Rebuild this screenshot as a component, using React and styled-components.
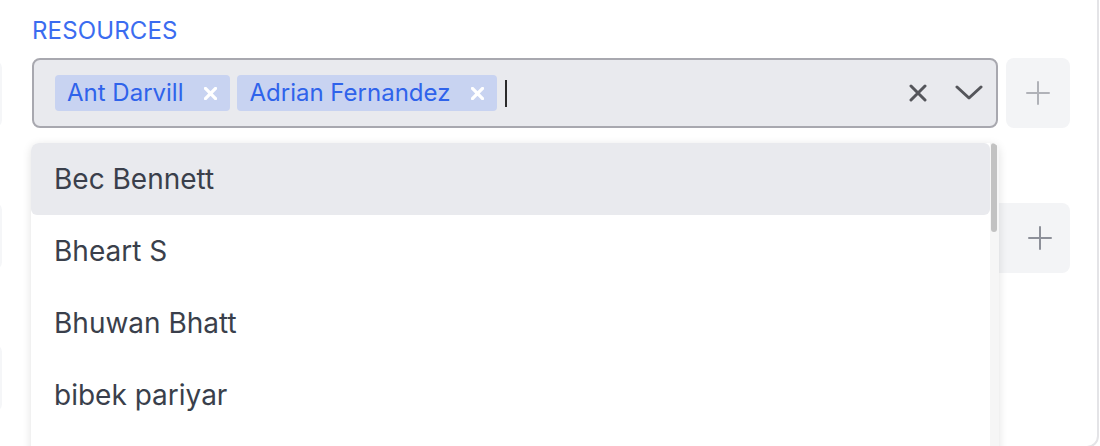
import React from 'react'
import styled, { createGlobalStyle } from 'styled-components'

const GlobalStyle = createGlobalStyle`
  html, body {
    margin: 0;
    padding: 0;
    background: #fff;
    overflow: hidden;
  }
  body {
    font-family: Inter, 'Noto Sans', sans-serif;
  }
`

const Card = styled.div`
  box-sizing: border-box;
  width: 1139px;
  height: 468px;
  margin: -20px 0 0 -40px;
  border: 2px solid #e4e4e7;
  border-radius: 12px;
  display: grid;
  grid-template-columns: 40px 1038px;
  column-gap: 30px;
  overflow: hidden;
`

const SideColumn = styled.div`
  display: flex;
  flex-direction: column;
  gap: 74px;
  padding-top: 78px;
`

const Stub = styled.div`
  height: 68px;
  background: #f5f6f8;
  border-radius: 8px;
`

const Main = styled.div`
  display: flex;
  flex-direction: column;
  gap: 34px;
  padding-top: 35px;
`

const Field = styled.div`
  display: flex;
  flex-direction: column;
  gap: 13px;
`

const Label = styled.div`
  height: 28px;
  font-size: 24px;
  line-height: 28px;
  letter-spacing: 0.15px;
  text-transform: uppercase;
  color: #3b6cf0;
`

const Row = styled.div`
  position: relative;
  display: flex;
  gap: 8px;
  padding-right: ${(p) => (p.bare ? 72 : 0)}px;
`

const SelectBox = styled.div`
  box-sizing: border-box;
  flex: 1;
  height: 70px;
  display: flex;
  align-items: center;
  padding: 0 13px 0 21px;
  border: 2px solid ${(p) => (p.focused ? '#a8a8af' : '#e5e7eb')};
  border-radius: 8px;
  background: ${(p) => (p.focused ? '#e9eaee' : '#f3f4f6')};
`

const Values = styled.div`
  flex: 1;
  display: flex;
  align-items: center;
  gap: 7px;
`

const Chip = styled.div`
  height: 36px;
  display: flex;
  align-items: center;
  padding: 0 13px 0 12px;
  border-radius: 4px;
  background: #c8d3f1;
  color: #2f63eb;
  font-size: 24px;
  line-height: 36px;
`

const ChipRemove = styled.span`
  display: flex;
  margin-left: 20px;
  width: 14px;
  justify-content: center;
  color: #fff;
`

const Caret = styled.span`
  width: 2px;
  height: 27px;
  margin-left: 1px;
  background: #2b2b2b;
`

const Controls = styled.div`
  display: flex;
  align-items: center;
  gap: 28px;
  color: #55565b;
`

const IconButton = styled.div`
  box-sizing: border-box;
  width: ${(p) => p.width || 64}px;
  height: 70px;
  display: flex;
  align-items: center;
  justify-content: space-around;
  border-radius: 8px;
  background: #f3f4f6;
  color: ${(p) => p.color || '#a3a6ad'};
`

const Menu = styled.div`
  position: absolute;
  z-index: 5;
  top: calc(100% + 15px);
  left: -1px;
  width: 968px;
  height: 320px;
  display: flex;
  background: #fff;
  border-radius: 8px 8px 0 0;
  box-shadow: 0 2px 10px rgba(0, 0, 0, 0.12);
  overflow: hidden;
`

const Options = styled.div`
  flex: 1;
  display: flex;
  flex-direction: column;
`

const Option = styled.div`
  flex-shrink: 0;
  height: 72px;
  display: flex;
  align-items: center;
  padding-left: 23px;
  border-radius: 6px;
  font-size: 28px;
  color: #3a3f4b;
  background: ${(p) => (p.active ? '#e9eaee' : 'transparent')};
`

const Track = styled.div`
  width: 8px;
  padding-left: 1px;
  background: #f6f6f6;
`

const Thumb = styled.div`
  width: 6px;
  height: 89px;
  border-radius: 3px;
  background: #c2c2c2;
`

const Cross = ({ size = 18, stroke = 3 }) => (
  <svg width={size} height={size} viewBox="0 0 18 18" fill="none" stroke="currentColor" strokeWidth={stroke} strokeLinecap="round">
    <path d="M2 2L16 16M16 2L2 16" />
  </svg>
)

const Chevron = () => (
  <svg width="28" height="16" viewBox="0 0 28 16" fill="none" stroke="currentColor" strokeWidth="3" strokeLinecap="round" strokeLinejoin="round">
    <path d="M2 2L14 13L26 2" />
  </svg>
)

const Plus = () => (
  <svg width="24" height="24" viewBox="0 0 24 24" fill="none" stroke="currentColor" strokeWidth="2" strokeLinecap="round">
    <path d="M12 1V23M1 12H23" />
  </svg>
)

const Minus = () => (
  <svg width="24" height="24" viewBox="0 0 24 24" fill="none" stroke="currentColor" strokeWidth="2" strokeLinecap="round">
    <path d="M1 12H23" />
  </svg>
)

const selected = ['Ant Darvill', 'Adrian Fernandez']
const options = ['Bec Bennett', 'Bheart S', 'Bhuwan Bhatt', 'bibek pariyar']

export default function App() {
  return (
    <>
      <GlobalStyle />
      <Card>
        <SideColumn>
          <Stub />
          <Stub />
          <Stub />
        </SideColumn>
        <Main>
          <Field>
            <Label>Resources</Label>
            <Row>
              <SelectBox focused>
                <Values>
                  {selected.map((name) => (
                    <Chip key={name}>
                      {name}
                      <ChipRemove>
                        <Cross size={13} stroke={4.5} />
                      </ChipRemove>
                    </Chip>
                  ))}
                  <Caret />
                </Values>
                <Controls>
                  <Cross />
                  <Chevron />
                </Controls>
              </SelectBox>
              <IconButton color="#b0b2b8">
                <Plus />
              </IconButton>
              <Menu>
                <Options>
                  {options.map((name, i) => (
                    <Option key={name} active={i === 0}>
                      {name}
                    </Option>
                  ))}
                </Options>
                <Track>
                  <Thumb />
                </Track>
              </Menu>
            </Row>
          </Field>
          <Field>
            <Label />
            <Row>
              <SelectBox />
              <IconButton width={120} color="#8d9099">
                <Minus />
                <Plus />
              </IconButton>
            </Row>
          </Field>
          <Field>
            <Label />
            <Row bare>
              <SelectBox />
            </Row>
          </Field>
        </Main>
      </Card>
    </>
  )
}
